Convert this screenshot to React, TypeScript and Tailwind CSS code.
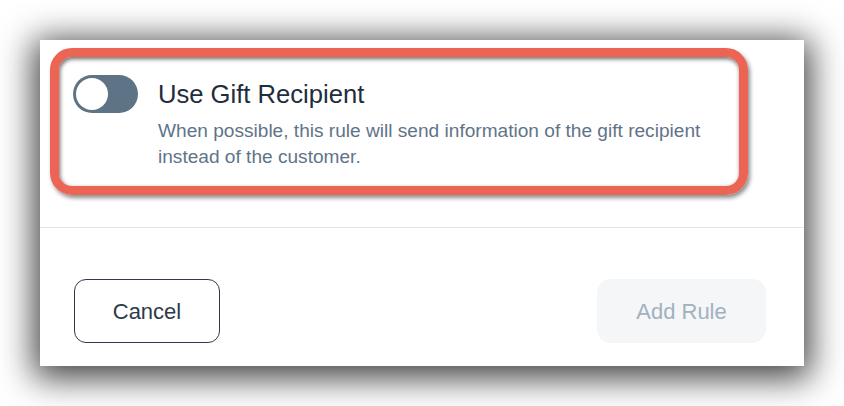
import { useState } from "react"

export default function App() {
  const [useGift, setUseGift] = useState(false)

  return (
    <div className="min-h-screen bg-white p-10 font-['Liberation_Sans',Arial,sans-serif]">
      <div className="flex h-[326px] w-[764px] flex-col bg-white shadow-[0_6px_32px_6px_rgba(0,0,0,0.75)]">
        {/* Toggle section, highlighted */}
        <div className="h-[187px] pl-[10px] pt-2">
          <div className="h-[147px] w-[698px] rounded-[22px] border-[9px] border-[#ec6453] pl-[14px] pt-[18px] shadow-[2px_3px_4px_rgba(0,0,0,0.45),inset_1px_2px_4px_rgba(0,0,0,0.6)]">
            <div className="flex gap-5">
              <button
                onClick={() => setUseGift((v) => !v)}
                className="relative h-[38px] w-[65px] shrink-0 rounded-full bg-[#5f7386]"
              >
                <span
                  className={
                    useGift
                      ? "absolute left-[30px] top-[3px] h-8 w-8 rounded-full bg-white"
                      : "absolute left-[3px] top-[3px] h-8 w-8 rounded-full bg-white"
                  }
                />
              </button>
              <div className="pt-1">
                <h3 className="text-[25.6px] leading-[30px] text-[#1f2d3d]">Use Gift Recipient</h3>
                <p className="mt-[9px] w-[560px] text-[19.1px] leading-[26px] text-[#5f7488]">
                  When possible, this rule will send information of the gift recipient instead of the customer.
                </p>
              </div>
            </div>
          </div>
        </div>

        <div className="h-px bg-[#e2e6ea]" />

        {/* Footer */}
        <div className="flex items-start justify-between pl-[34px] pr-[38px] pt-[51px]">
          <button className="h-16 w-[146px] rounded-xl border border-[#2d3a4a] text-[22px] text-[#2d3a4a]">
            Cancel
          </button>
          <button disabled className="h-16 w-[169px] rounded-[14px] bg-[#f4f6f8] text-[22px] text-[#a3b0bf]">
            Add Rule
          </button>
        </div>
      </div>
    </div>
  )
}
